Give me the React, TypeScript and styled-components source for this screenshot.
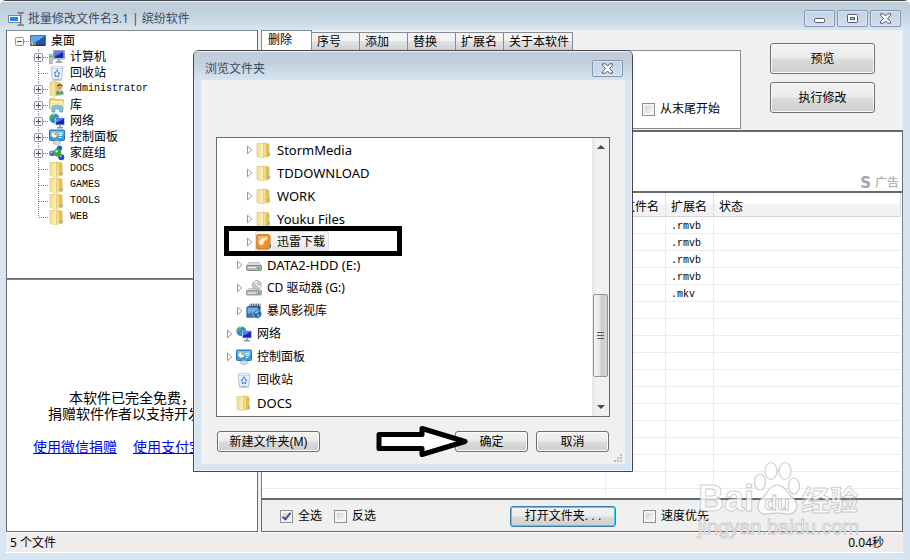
import React from "react";
import styled, { createGlobalStyle, css } from "styled-components";

const uiFont = `"Liberation Sans", "Noto Sans CJK SC", sans-serif`;
const dialogFont = `"Noto Sans", "Noto Sans CJK SC", sans-serif`;
const monoFont = `"Liberation Mono", "Noto Sans CJK SC", monospace`;

const GlobalStyle = createGlobalStyle`
  *, *::before, *::after { box-sizing: border-box; }
  body { margin: 0; background: #fff; font-family: ${uiFont}; font-size: 12px; line-height: 16px; color: #000; overflow: hidden; }
  button, input { font: inherit; color: inherit; margin: 0; }
  ul { list-style: none; margin: 0; padding: 0; }
  p { margin: 0; }
  svg { display: block; flex: none; }
`;

/* ---------- window ---------- */

const Window = styled.main`
  position: relative;
  display: flex;
  flex-direction: column;
  height: 100vh;
  min-height: 480px;
  padding: 0 7px 7px 6px;
  background: #d7e4f1;
  border-radius: 6px 6px 0 0;
  overflow: hidden;
`;

const TitleBar = styled.header<{ $inset?: boolean }>`
  display: flex;
  align-items: center;
  flex: none;
  height: 30px;
  margin: 0 -7px 0 -6px;
  padding: 6px 9px 0 8px;
  border-top: 1px solid #45454a;
  box-shadow: inset 0 1px 0 #eaf1f8;
  background: linear-gradient(#bfccda, #c2cfdc 40%, #d7e4f1);
  color: #3e4c5c;
  ${(p) =>
    p.$inset &&
    css`
      height: 29px;
      margin: 0;
      padding: 6px 9px 0 11px;
      border-top: 0;
    `}
`;

const Title = styled.h1`
  flex: 1;
  margin: 0 0 0 4px;
  font: 12px/16px ${dialogFont};
  &:first-child { margin-left: 0; }
`;

const Captions = styled.div`
  display: flex;
  gap: 2px;
`;

const CaptionButton = styled.button`
  display: grid;
  place-items: center;
  width: 31px;
  height: 17px;
  padding: 0;
  border: 1px solid #8496b4;
  border-radius: 2px;
  background: linear-gradient(#c6d3e1, #d0dcea);
  box-shadow: inset 0 0 0 1px #dce6f1;
`;

const Body = styled.div`
  display: grid;
  grid-template-columns: 252px minmax(0, 1fr);
  gap: 3px;
  flex: 1;
  min-height: 0;
  background: #f0f0f0;
`;

const StatusBar = styled.footer`
  display: flex;
  justify-content: space-between;
  align-items: center;
  flex: none;
  height: 21px;
  padding: 0 19px 0 4px;
  background: #f0eceb;
  border: solid #fff;
  border-width: 1px 0;
  font-family: ${dialogFont};
`;

/* ---------- left column ---------- */

const Sidebar = styled.div`
  display: grid;
  grid-template-rows: minmax(0, 249fr) minmax(0, 253fr);
`;

const Pane = styled.section`
  border: 1px solid #696b70;
  border-top: 1px solid #85868b;
  background: #fff;
  overflow: hidden;
`;

const Tree = styled.ul`
  padding: 2px 0 0 6px;
`;

const TreeRow = styled.li<{ $root?: boolean }>`
  display: flex;
  align-items: center;
  height: 16px;
  margin-left: ${(p) => (p.$root ? 0 : 20)}px;
`;

const TreeLabel = styled.span<{ $latin?: boolean }>`
  margin-left: 5px;
  font-size: ${(p) => (p.$latin ? 10 : 12)}px;
  font-family: ${(p) => (p.$latin ? monoFont : uiFont)};
  white-space: nowrap;
`;

const Donate = styled.div`
  padding-top: 110px;
  text-align: center;
  font-size: 14px;
  line-height: 16px;
  white-space: nowrap;
`;

const Links = styled.p`
  display: flex;
  justify-content: center;
  gap: 16px;
  padding-top: 17px;
  a { color: #0000ee; text-decoration: underline; }
`;

/* ---------- right column ---------- */

const Main = styled.div`
  display: flex;
  flex-direction: column;
  min-width: 0;
  min-height: 0;
`;

const Top = styled.section`
  display: flex;
  flex: none;
  height: 100px;
`;

const TabArea = styled.div`
  display: flex;
  flex-direction: column;
  flex: 0 1 480px;
`;

const Tabs = styled.div`
  display: flex;
  align-items: flex-end;
  height: 20px;
`;

const Tab = styled.button<{ $active?: boolean }>`
  height: 18px;
  min-width: 48px;
  padding: 0 3px 0 5px;
  text-align: left;
  line-height: 16px;
  white-space: nowrap;
  border: solid #8a8c95;
  border-width: 1px 1px 0 0;
  background: linear-gradient(#f3f3f3 45%, #e2e2e2 50%, #d0d0d0);
  ${(p) =>
    p.$active &&
    css`
      height: 20px;
      min-width: 51px;
      padding: 0 6px 2px;
      border-left-width: 1px;
      background: #fff;
    `}
`;

const TabPanel = styled.div`
  display: flex;
  justify-content: flex-end;
  align-items: flex-end;
  flex: 1;
  margin-bottom: 1px;
  padding: 0 20px 11px;
  border: 1px solid #8a8c95;
  background: #fff;
`;

const Actions = styled.div`
  display: flex;
  flex-direction: column;
  gap: 8px;
  padding: 13px 0 0 29px;
`;

const Button = styled.button<{ $tall?: boolean; $focus?: boolean; $width: number }>`
  width: ${(p) => p.$width}px;
  height: ${(p) => (p.$tall ? 31 : 21)}px;
  padding: 0;
  line-height: 16px;
  border: 1px solid ${(p) => (p.$focus ? "#3a7fae" : "#707070")};
  border-radius: 3px;
  background: linear-gradient(#f3f3f3, #ebebeb 49%, #dcdcdc 51%, #cecece);
  box-shadow: inset 0 0 0 1px ${(p) => (p.$focus ? "#3fd0f5" : "#fafafa")};
`;

const Ad = styled.aside`
  display: flex;
  align-items: flex-end;
  justify-content: flex-end;
  gap: 4px;
  flex: none;
  height: 63px;
  padding-right: 3px;
  border: solid #66686c;
  border-width: 2px 1px 2px;
  background: #fff;
  color: #a5a5a5;
`;

const AdMark = styled.b`
  font: bold 15px/15px "DejaVu Sans", sans-serif;
`;

const Grid = styled.div`
  flex: 1;
  min-height: 0;
  padding: 0 1px 2px 0;
  border: solid #7b7e84;
  border-width: 0 1px;
  background: #fff;
`;

const GridClip = styled.div`
  height: 100%;
  overflow: hidden;
`;

const FileTable = styled.table`
  width: 100%;
  table-layout: fixed;
  border-collapse: separate;
  border-spacing: 0;
  th, td { padding: 0 0 0 5px; text-align: left; font-weight: normal; white-space: nowrap; border-right: 1px solid #ececec; }
  th { height: 24px; padding-top: 4px; background: linear-gradient(#fff 45%, #f3f4f6 50%, #f1f2f4); border-bottom: 1px solid #d5d5d5; border-right-color: #dedfe1; }
  td { height: 17px; padding-top: 4px; border-bottom: 1px solid #ececec; font: 10px/12px ${monoFont}; }
  td:last-child { border-right: 0; }
`;

const Col = styled.col<{ $width?: number }>`
  width: ${(p) => (p.$width ? `${p.$width}px` : "auto")};
`;

const BottomBar = styled.section`
  display: flex;
  align-items: center;
  flex: none;
  height: 34px;
  padding: 1px 0 0 18px;
  border: solid #66686c;
  border-width: 2px 1px 1px;
`;

const Spacer = styled.span<{ $size: number }>`
  flex: 0 1 ${(p) => p.$size}px;
`;

const CheckLabel = styled.label`
  display: flex;
  align-items: center;
  gap: 5px;
  white-space: nowrap;
`;

const Check = styled.input`
  appearance: none;
  display: grid;
  place-items: center;
  width: 13px;
  height: 13px;
  border: 1px solid #8e8f8f;
  background: linear-gradient(135deg, #c6cad2, #f4f5f6 80%);
  box-shadow: inset 0 0 0 2px #f4f4f4;
  &:checked::after {
    content: "";
    width: 5px;
    height: 9px;
    margin-bottom: 2px;
    border: solid #40529c;
    border-width: 0 2px 2px 0;
    transform: rotate(38deg);
  }
`;

/* ---------- folder dialog ---------- */

const Dialog = styled.section`
  position: absolute;
  left: 193px;
  top: 50px;
  display: flex;
  flex-direction: column;
  width: 440px;
  height: 422px;
  border: 1px solid #46464b;
  border-radius: 6px 6px 0 0;
  background: #d7e4f1;
  box-shadow: inset 0 0 0 1px #eaf1f8;
  font-family: ${dialogFont};
  overflow: hidden;
`;

const DialogBody = styled.div`
  position: relative;
  display: flex;
  flex-direction: column;
  flex: 1;
  min-height: 0;
  margin: 0 7px 7px;
  padding: 57px 15px 12px;
  background: #f0f0f0;
`;

const ListBox = styled.div`
  display: flex;
  flex: 1;
  min-height: 0;
  border: 1px solid #696b70;
  background: #fff;
`;

const FolderList = styled.ul`
  flex: 1;
  overflow: hidden;
`;

const FolderRow = styled.li<{ $depth: number }>`
  display: flex;
  align-items: center;
  height: 23px;
  padding-left: ${(p) => 9 + p.$depth * 10}px;
`;

const FolderItem = styled.span<{ $selected?: boolean; $latin?: boolean }>`
  display: flex;
  align-items: center;
  gap: 5px;
  height: 21px;
  padding: 0 3px 0 0;
  font-size: ${(p) => (p.$latin ? 13 : 12)}px;
  border: 1px solid ${(p) => (p.$selected ? "#dedede" : "transparent")};
  border-radius: 2px;
  background: ${(p) => (p.$selected ? "linear-gradient(#fafafa, #e8e8e8)" : "none")};
  white-space: nowrap;
`;

const ScrollTrack = styled.div`
  display: flex;
  flex-direction: column;
  align-items: center;
  width: 17px;
  padding: 6px 0 6px;
  background: linear-gradient(90deg, #e6e6e6, #f2f2f2 30%, #f0f0f0);
`;

const ScrollThumb = styled.div`
  display: grid;
  place-items: center;
  width: 15px;
  height: 83px;
  margin: auto 0 28px;
  border: 1px solid #959595;
  border-radius: 2px;
  background: linear-gradient(90deg, #f5f5f5, #e6e6e8 45%, #c9cacd 55%, #d6d7da);
`;

const DialogButtons = styled.div`
  display: flex;
  gap: 8px;
  padding: 14px 1px 0;
  font-family: ${uiFont};
  button:first-child { margin-right: auto; }
`;

const Grip = styled.svg`
  position: absolute;
  right: 2px;
  bottom: 1px;
`;

/* ---------- overlays ---------- */

const Highlight = styled.div`
  position: absolute;
  left: 224px;
  top: 226px;
  width: 178px;
  height: 30px;
  border: 5px solid #000;
`;

const Pointer = styled.svg`
  position: absolute;
  left: 376px;
  top: 424px;
`;

const Watermark = styled.div`
  position: absolute;
  left: 698px;
  top: 461px;
  color: rgba(255, 255, 255, 0.8);
  -webkit-text-stroke: 1px rgba(180, 180, 180, 0.65);
  white-space: nowrap;
  pointer-events: none;
`;

const Brand = styled.div`
  display: flex;
  align-items: flex-end;
  height: 56px;
  font: bold 36px/36px "Liberation Sans", sans-serif;
`;

const BrandCn = styled.span`
  font: bold 28px/36px "Noto Sans CJK SC", sans-serif;
`;

const Site = styled.div`
  font: 20px/20px "Liberation Sans", sans-serif;
`;

/* ---------- icons ---------- */

const Svg = ({ children }: { children: React.ReactNode }) => (
  <svg width="16" height="16" viewBox="0 0 16 16" aria-hidden="true">{children}</svg>
);

const FolderIcon = () => (
  <Svg>
    <path d="M1 1.500h5.500l1 .8v13L6.500 15.800 1 14.500z" fill="#f3e39b" stroke="#d8bf62" strokeWidth=".6" />
    <path d="M7 .6l5.500.9v13.200L7 15.800z" fill="#e3c052" />
    <path d="M7.500 1.200l2.400.4v13.300l-2.400.5z" fill="#f2dc8a" />
    <path d="M5.200 3v11.500M6.300 2v13.500" stroke="#fff9d8" strokeWidth=".7" />
    <path d="M12.300 1.800l1 .6v11.800l-1 .6z" fill="#cfa945" />
    <path d="M12.600 11h.9v2.800h-.9z" fill="#4c9ad0" />
  </Svg>
);

const DesktopIcon = () => (
  <Svg>
    <path d="M.5 2.500h15v10H.5z" fill="#1d55b0" stroke="#5f6f86" />
    <path d="M1 3h14L6 9 1 11z" fill="#5fa6ea" />
    <path d="M1 11.600h14V13H1z" fill="#2a3444" />
    <path d="M1 9l3 1.500L2 13z" fill="#f3d34c" />
    <path d="M4.500 10.300l1.600 1.200-1.800.8z" fill="#e9f5ff" />
  </Svg>
);

const ComputerIcon = () => (
  <Svg>
    <path d="M.5 5.500h2.800v9H.5z" fill="#c9ced6" stroke="#7e8791" strokeWidth=".7" />
    <path d="M1 7.500h1.800" stroke="#3cae3a" />
    <path d="M4.500 1.500h11v8.500h-11z" fill="#dfe3e8" stroke="#98a1ab" />
    <path d="M5.500 2.500h9v6.500h-9z" fill="#1526b8" />
    <path d="M5.500 2.500h9L9 6 5.500 7z" fill="#5a78ea" />
    <path d="M8.500 10.500h3v2h2v1.500h-7v-1.500h2z" fill="#9aa4ae" />
  </Svg>
);

const RecycleIcon = () => (
  <Svg>
    <path d="M2 2.500h12l-1.600 12.800H3.700z" fill="#e6eef6" stroke="#a6b5c4" strokeWidth=".8" />
    <path d="M2 2.300l2-1h8l2 1-2 1H4z" fill="#f9fcff" stroke="#a6b5c4" strokeWidth=".6" />
    <path d="M5.700 8.500L8 5.400l2.300 3.100-1 2.700H6.700z" fill="none" stroke="#3f7fd9" strokeWidth="1.400" strokeDasharray="2.300 .8" />
    <path d="M4.800 14.300h6.400" stroke="#9fb0c0" />
  </Svg>
);

const UserIcon = () => (
  <Svg>
    <path d="M1 1l5.500-.5v14.800L1 14.300z" fill="#f3e39b" stroke="#d8bf62" strokeWidth=".6" />
    <path d="M6.500.5l6 1v13l-6 .8z" fill="#e8cb68" />
    <circle cx="10.800" cy="5.800" r="2.600" fill="#d9a77e" />
    <path d="M8 5.500c0-3 5.700-3 5.700 0-1.500-1.300-3.500-1.300-5.700 0z" fill="#5a3a20" />
    <path d="M6.800 13.500c0-6 8-6 8 0z" fill="#5d9a72" />
    <path d="M9.900 9h1.900l-.9 3z" fill="#fff" />
  </Svg>
);

const LibraryIcon = () => (
  <Svg>
    <path d="M.5 2.500l1-1h4.200l1 1.200h7.800v9H.5z" fill="#edd37a" stroke="#cba94a" strokeWidth=".7" />
    <path d="M2 4h12v2H2z" fill="#fdf6cf" />
    <path d="M.8 5.500h14.500L14.500 12H1.300z" fill="#f7e5a0" />
    <path d="M3 15V10.500C3 8 13.500 8 13.500 10.500V15h-2.700v-3.300H5.800V15z" fill="#86c8ea" stroke="#3f93c4" strokeWidth=".7" />
  </Svg>
);

const NetworkIcon = () => (
  <Svg>
    <circle cx="5.300" cy="5.300" r="4.900" fill="#3283dc" />
    <path d="M1 3.500C3 .5 5 1 7 1 5 2.500 6 4 4 4.500S3 7 1 6zM5 6l3 .5-1.500 3.200C5 9.300 4.500 8 5 6z" fill="#3fba45" />
    <path d="M3 2.200c1-1 2-1 3-.9" stroke="#c9efff" strokeWidth=".8" fill="none" />
    <path d="M6.500 5h9v7h-9z" fill="#1528b4" stroke="#c5ccd6" strokeWidth=".9" />
    <path d="M7 5.500h8l-5 3-3 1z" fill="#5a7cf0" />
    <path d="M10 12.500h2V14h2v1.500H8V14h2z" fill="#8d98a4" />
  </Svg>
);

const ControlPanelIcon = () => (
  <Svg>
    <rect x=".5" y="1" width="15" height="10.500" rx="1" fill="#3d9bd8" stroke="#2a75ae" />
    <path d="M1.500 2h13v3.500l-13 2z" fill="#78c4ee" />
    <circle cx="5.300" cy="6" r="2.600" fill="#fff" />
    <path d="M5.300 6V3.200A2.800 2.800 0 0 1 8 6z" fill="#f49b24" />
    <path d="M9.800 4.500h3.500M9.800 6.500h3.500M9.800 8.500h2.500" stroke="#fff" />
    <ellipse cx="8" cy="13.500" rx="3.800" ry="2" fill="#d8dce1" stroke="#a5abb2" strokeWidth=".6" />
  </Svg>
);

const HomegroupIcon = () => (
  <Svg>
    <path d="M3 9l6-6 4 10z" fill="none" stroke="#8fb6d8" strokeWidth="1.400" />
    <circle cx="10.500" cy="3.200" r="2.700" fill="#2d5fc4" />
    <circle cx="3" cy="8.200" r="2.800" fill="#3f6fd0" />
    <circle cx="12.300" cy="12.300" r="3" fill="#2648b4" />
    <circle cx="8.500" cy="7.500" r="3.700" fill="#36a83c" />
    <circle cx="7.600" cy="6.300" r="1.300" fill="#b4efa4" />
    <circle cx="2.500" cy="7.200" r=".9" fill="#c4dcff" />
    <circle cx="11.800" cy="11.200" r="1" fill="#b0c8ff" />
  </Svg>
);

const DownloadIcon = () => (
  <Svg>
    <rect x=".8" y=".8" width="12.500" height="14.200" rx=".8" fill="#f0912a" stroke="#cf6c12" />
    <path d="M2 2h10v4L2 11z" fill="#f9b65c" />
    <path d="M11 3.500C7 3.500 5 4.500 4 7H2.800L4.500 11.500 8.500 9.500 7 8.500C8 6.500 9 5.500 11 5z" fill="#fff2dc" />
    <path d="M14.200 2v12" stroke="#e3a14c" />
    <path d="M14.500 10v3.500" stroke="#3f87bd" />
  </Svg>
);

const DriveIcon = () => (
  <Svg>
    <path d="M3 5.500h10l2.500 3.500H.5z" fill="#dcdfe2" stroke="#9a9ea3" strokeWidth=".6" />
    <rect x=".5" y="8.500" width="15" height="5" rx="1" fill="#b4b7bb" stroke="#73777c" strokeWidth=".8" />
    <path d="M2 10.500h8" stroke="#eceef0" strokeWidth="1.200" />
    <path d="M12.500 10v2.500" stroke="#36c43c" strokeWidth="1.800" />
  </Svg>
);

const CdIcon = () => (
  <Svg>
    <path d="M3 8.500h10l2.500 2.500H.5z" fill="#dcdfe2" stroke="#9a9ea3" strokeWidth=".6" />
    <rect x=".5" y="10.800" width="15" height="4.200" rx=".8" fill="#b9bcc0" stroke="#73777c" strokeWidth=".7" />
    <circle cx="10.800" cy="5" r="4.400" fill="#c6ced4" stroke="#8b949b" strokeWidth=".7" />
    <path d="M10.800 5L8 1.800A4.200 4.200 0 0 1 11 .9zM10.800 5l2.800 3.200a4.200 4.200 0 0 0 1.300-2.400z" fill="#f4f8fa" />
    <circle cx="10.800" cy="5" r="1.300" fill="#fff" stroke="#8b949b" strokeWidth=".5" />
    <path d="M2 13h8" stroke="#f1f2f3" />
    <path d="M12.800 12.200v1.800" stroke="#36b43c" strokeWidth="1.500" />
  </Svg>
);

const MoviesIcon = () => (
  <Svg>
    <path d="M3.500.8h11v12h-11z" fill="#39424e" />
    <path d="M4 2h10.500" stroke="#fff" strokeWidth="1.300" strokeDasharray="1.300 .9" />
    <path d="M.8 4.500l1-1h10.500v10.800H.8z" fill="#3477b8" stroke="#1e5288" strokeWidth=".7" />
    <path d="M1.800 4.800h9.700v3l-9.700 3z" fill="#74aede" />
    <circle cx="11.300" cy="11" r="4.300" fill="#2268ad" stroke="#cfe5f8" strokeWidth=".6" />
    <path d="M8.500 10c1-2 3-2.500 4.500-1.800-1 1-1 2-2.500 2.500zM11 12l2.800-.7-1.500 2.800z" fill="#84c4f0" />
  </Svg>
);

const AppIcon = () => (
  <svg width="16" height="14" viewBox="0 0 16 14" aria-hidden="true">
    <path d="M.5 3.500h12v7H.5z" fill="#fff" stroke="#7b8087" />
    <path d="M2 5h8v4H2z" fill="#1686f4" />
    <path d="M9.500.7h2l1.200 1 1.200-1h2M9.500 13.300h2l1.200-1 1.200 1h2M12.700 1.500v11" fill="none" stroke="#74797f" strokeWidth="1.500" />
  </svg>
);

const CloseGlyph = () => (
  <svg width="13" height="11" viewBox="0 0 13 11" aria-hidden="true">
    <path d="M1.500.8h3L6.500 3l2-2.200h3v1.400L8.600 5.500l2.900 3.300v1.400h-3L6.500 8l-2 2.200h-3V8.800l2.900-3.300-2.900-3.300z" fill="#fdfdfe" stroke="#54596b" />
  </svg>
);

const MinimizeGlyph = () => (
  <svg width="13" height="11" viewBox="0 0 13 11" aria-hidden="true">
    <rect x="1.500" y="5.500" width="10" height="4" rx="1" fill="#fdfdfe" stroke="#54596b" />
  </svg>
);

const RestoreGlyph = () => (
  <svg width="13" height="11" viewBox="0 0 13 11" aria-hidden="true">
    <rect x="1.500" y="1.500" width="10" height="8" rx="1" fill="#fdfdfe" stroke="#54596b" />
    <rect x="4.500" y="4.500" width="4" height="2" fill="#c2cfdd" stroke="#54596b" />
  </svg>
);

type Link = "first" | "box" | "line" | "last";

const Branch = ({ kind }: { kind: Link }) => {
  const root = kind === "first";
  const x = root ? 6.5 : 5.5;
  return (
    <svg width={root ? 17 : 16} height="16" viewBox={`0 0 ${root ? 17 : 16} 16`} aria-hidden="true">
      {!root && <path d={`M${x} 0v${kind === "last" ? 8 : 16}`} stroke="#808080" strokeDasharray="1 1" />}
      <path d={`M${x + 0.5} 8.500h12`} stroke="#808080" strokeDasharray="1 1" />
      {(root || kind === "box") && (
        <>
          <rect x={x - 4} y="4.500" width="8" height="8" rx="1" fill="#f7f7f7" stroke="#919191" />
          <path d={`M${x - 2.5} 8.500h5${root ? "" : `M${x} 6v5`}`} stroke="#3a4fa0" />
        </>
      )}
    </svg>
  );
};

const Expander = ({ shown }: { shown: boolean }) => (
  <svg width="9" height="10" viewBox="0 0 9 10" aria-hidden="true">
    {shown && <path d="M1.500 1.200L5.800 5 1.500 8.800z" fill="#fff" stroke="#989898" />}
  </svg>
);

const ScrollArrow = ({ down }: { down?: boolean }) => (
  <svg width="8" height="5" viewBox="0 0 8 5" aria-hidden="true">
    <path d={down ? "M0 0h8L4 4z" : "M0 5h8L4 1z"} fill="#4a4a4a" />
  </svg>
);

/* ---------- data ---------- */

const tree: { label: string; icon: React.FC; link: Link; latin?: boolean }[] = [
  { label: "桌面", icon: DesktopIcon, link: "first" },
  { label: "计算机", icon: ComputerIcon, link: "box" },
  { label: "回收站", icon: RecycleIcon, link: "line" },
  { label: "Administrator", icon: UserIcon, link: "box", latin: true },
  { label: "库", icon: LibraryIcon, link: "box" },
  { label: "网络", icon: NetworkIcon, link: "box" },
  { label: "控制面板", icon: ControlPanelIcon, link: "box" },
  { label: "家庭组", icon: HomegroupIcon, link: "box" },
  { label: "DOCS", icon: FolderIcon, link: "line", latin: true },
  { label: "GAMES", icon: FolderIcon, link: "line", latin: true },
  { label: "TOOLS", icon: FolderIcon, link: "line", latin: true },
  { label: "WEB", icon: FolderIcon, link: "last", latin: true },
];

const folders: { label: string; icon: React.FC; depth: number; latin?: boolean; leaf?: boolean; selected?: boolean }[] = [
  { label: "StormMedia", icon: FolderIcon, depth: 2, latin: true },
  { label: "TDDOWNLOAD", icon: FolderIcon, depth: 2, latin: true },
  { label: "WORK", icon: FolderIcon, depth: 2, latin: true },
  { label: "Youku Files", icon: FolderIcon, depth: 2, latin: true },
  { label: "迅雷下载", icon: DownloadIcon, depth: 2, selected: true },
  { label: "DATA2-HDD (E:)", icon: DriveIcon, depth: 1, latin: true },
  { label: "CD 驱动器 (G:)", icon: CdIcon, depth: 1 },
  { label: "暴风影视库", icon: MoviesIcon, depth: 1 },
  { label: "网络", icon: NetworkIcon, depth: 0 },
  { label: "控制面板", icon: ControlPanelIcon, depth: 0 },
  { label: "回收站", icon: RecycleIcon, depth: 0, leaf: true },
  { label: "DOCS", icon: FolderIcon, depth: 0, latin: true, leaf: true },
];

const tabs = ["删除", "序号", "添加", "替换", "扩展名", "关于本软件"];
const extensions = [".rmvb", ".rmvb", ".rmvb", ".rmvb", ".mkv"];
const rows = Array.from({ length: 17 }, (_, i) => extensions[i] ?? "");

const CheckBox = ({ label, checked }: { label: string; checked?: boolean }) => (
  <CheckLabel>
    <Check type="checkbox" defaultChecked={checked} />
    {label}
  </CheckLabel>
);

const BrowseDialog = () => (
  <Dialog role="dialog" aria-label="浏览文件夹">
    <TitleBar $inset>
      <Title as="h2">浏览文件夹</Title>
      <CaptionButton aria-label="关闭"><CloseGlyph /></CaptionButton>
    </TitleBar>
    <DialogBody>
      <ListBox>
        <FolderList>
          {folders.map(({ label, icon: Icon, depth, latin, leaf, selected }) => (
            <FolderRow key={label} $depth={depth}>
              <Expander shown={!leaf} />
              <FolderItem $selected={selected} $latin={latin}>
                <Icon />
                {label}
              </FolderItem>
            </FolderRow>
          ))}
        </FolderList>
        <ScrollTrack>
          <ScrollArrow />
          <ScrollThumb>
            <svg width="8" height="9" viewBox="0 0 8 9" aria-hidden="true">
              <path d="M0 1.500h7M0 4.500h7M0 7.500h7" stroke="#5b5b5b" />
            </svg>
          </ScrollThumb>
          <ScrollArrow down />
        </ScrollTrack>
      </ListBox>
      <DialogButtons>
        <Button $width={103}>新建文件夹(M)</Button>
        <Button $width={73}>确定</Button>
        <Button $width={73}>取消</Button>
      </DialogButtons>
      <Grip width="9" height="9" viewBox="0 0 9 9" aria-hidden="true">
        <path d="M6 0h2v2H6zM3 3h2v2H3zM6 3h2v2H6zM0 6h2v2H0zM3 6h2v2H3zM6 6h2v2H6z" fill="#bcbcbc" />
      </Grip>
    </DialogBody>
  </Dialog>
);

export default function App() {
  return (
    <>
      <GlobalStyle />
      <Window>
        <TitleBar>
          <AppIcon />
          <Title>批量修改文件名3.1 | 缤纷软件</Title>
          <Captions>
            <CaptionButton aria-label="最小化"><MinimizeGlyph /></CaptionButton>
            <CaptionButton aria-label="还原"><RestoreGlyph /></CaptionButton>
            <CaptionButton aria-label="关闭"><CloseGlyph /></CaptionButton>
          </Captions>
        </TitleBar>

        <Body>
          <Sidebar>
            <Pane>
              <Tree>
                {tree.map(({ label, icon: Icon, link, latin }) => (
                  <TreeRow key={label} $root={link === "first"}>
                    <Branch kind={link} />
                    <Icon />
                    <TreeLabel $latin={latin}>{label}</TreeLabel>
                  </TreeRow>
                ))}
              </Tree>
            </Pane>
            <Pane>
              <Donate>
                <p>本软件已完全免费，</p>
                <p>捐赠软件作者以支持开发。</p>
                <Links>
                  <a href="#wechat">使用微信捐赠</a>
                  <a href="#alipay">使用支付宝捐赠</a>
                </Links>
              </Donate>
            </Pane>
          </Sidebar>

          <Main>
            <Top>
              <TabArea>
                <Tabs role="tablist">
                  {tabs.map((name, i) => (
                    <Tab key={name} role="tab" aria-selected={i === 0} $active={i === 0}>{name}</Tab>
                  ))}
                </Tabs>
                <TabPanel role="tabpanel">
                  <CheckBox label="从末尾开始" />
                </TabPanel>
              </TabArea>
              <Actions>
                <Button $tall $width={105}>预览</Button>
                <Button $tall $width={105}>执行修改</Button>
              </Actions>
            </Top>

            <Ad>
              <AdMark>S</AdMark>
              <span>广告</span>
            </Ad>

            <Grid>
              <GridClip>
                <FileTable>
                  <colgroup>
                    <Col $width={344} />
                    <Col $width={60} />
                    <Col $width={48} />
                    <Col />
                  </colgroup>
                  <thead>
                    <tr><th>文件名</th><th>新文件名</th><th>扩展名</th><th>状态</th></tr>
                  </thead>
                  <tbody>
                    {rows.map((ext, i) => (
                      <tr key={i}><td /><td /><td>{ext}</td><td /></tr>
                    ))}
                  </tbody>
                </FileTable>
              </GridClip>
            </Grid>

            <BottomBar>
              <CheckBox label="全选" checked />
              <Spacer $size={12} />
              <CheckBox label="反选" />
              <Spacer $size={134} />
              <Button $width={106} $focus>打开文件夹. . .</Button>
              <Spacer $size={27} />
              <CheckBox label="速度优先" />
            </BottomBar>
          </Main>
        </Body>

        <StatusBar>
          <span>5 个文件</span>
          <span>0.04秒</span>
        </StatusBar>

        <BrowseDialog />
        <Highlight />
        <Pointer width="94" height="36" viewBox="0 0 94 36" aria-hidden="true">
          <path d="M3 10.500h43V4.500L89 17.500 46 30.500v-6H3z" fill="#fff" stroke="#000" strokeWidth="5" strokeLinejoin="round" />
        </Pointer>
        <Watermark>
          <Brand>
            Bai
            <svg width="48" height="56" viewBox="0 0 48 56" aria-hidden="true">
              <g fill="#fff" fillOpacity=".8" stroke="#b8b8b8" strokeOpacity=".7" strokeWidth="1.200">
                <ellipse cx="6" cy="21" rx="5.500" ry="8" />
                <ellipse cx="17" cy="10" rx="6" ry="8.500" />
                <ellipse cx="31" cy="10" rx="6" ry="8.500" />
                <ellipse cx="40" cy="25" rx="5.500" ry="8" />
                <path d="M23 24c-8 0-9 9-15 13-6 5-6 16 4 16 6 0 7-1 11-1s6 1 11 1c10 0 11-10 5-16-6-5-8-13-16-13z" />
              </g>
              <text x="23" y="49" textAnchor="middle" fontFamily="Liberation Sans, sans-serif" fontWeight="bold" fontSize="21" fill="#fff" stroke="#b8b8b8" strokeOpacity=".8">du</text>
            </svg>
            <BrandCn>经验</BrandCn>
          </Brand>
          <Site>jingyan.baidu.com</Site>
        </Watermark>
      </Window>
    </>
  );
}
